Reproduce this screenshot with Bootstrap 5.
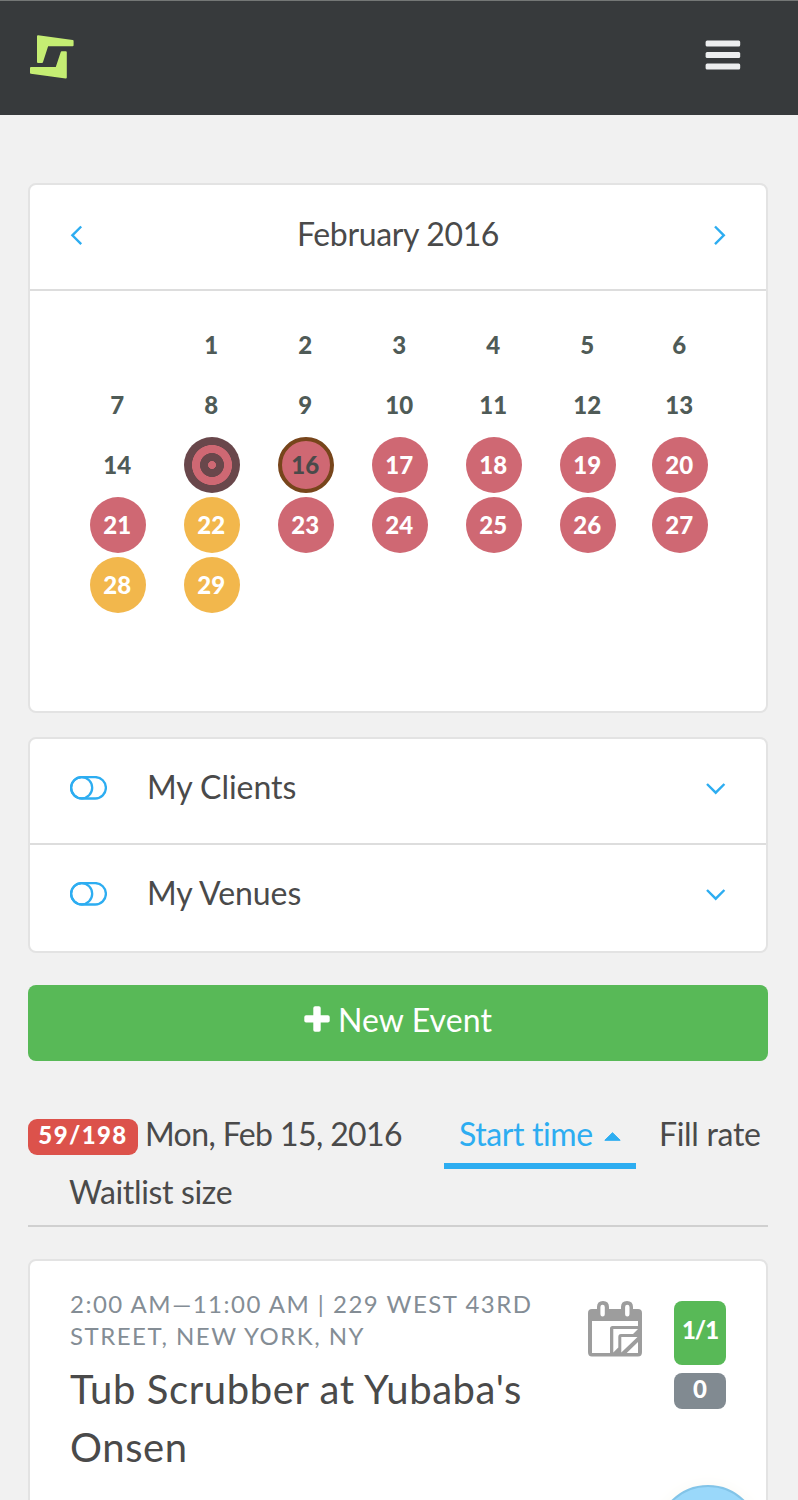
<!DOCTYPE html>
<html lang="en">
<head>
<meta charset="utf-8">
<meta name="viewport" content="width=device-width, initial-scale=1">
<title>Events</title>
<link rel="stylesheet" href="https://cdn.jsdelivr.net/npm/bootstrap@5.3.0/dist/css/bootstrap.min.css">
<style>
html,body{height:1500px;overflow:hidden}
body{background:#f1f1f1;color:#4a4a4a;font-family:Lato,"Open Sans",sans-serif;font-size:32px;line-height:40px;font-variant-ligatures:none}
svg{display:block;flex:none}
.topbar{height:115px;background:#373a3c;border-top:1px solid #747776;padding:0 57px 2px 30px}
.menu-btn{margin-top:-5px}
.page{height:1385px;overflow:hidden;padding:68px 30px 0 28px}
.panel{background:#fff;border:2px solid #e3e3e3;border-radius:8px}
.cal-panel{height:530px}
.cal-head{height:106px;border-bottom:2px solid #ddd;padding:0 40px 8px}
.cal-title{letter-spacing:-.35px;padding-top:1px}
.days{display:grid;grid-template-columns:repeat(6,94px) 90px;grid-auto-rows:60px;margin:24px 0 0 41px;place-items:center}
.day{width:56px;height:56px;border-radius:50%;display:flex;align-items:center;justify-content:center;font-size:24px;font-weight:900;line-height:52px;padding:0 1.5px 1px 0;color:#4f5b57}
.low{background:#cf6873;color:#fff}
.mid{background:#f2b74c;color:#fff}
.today{border:4px solid #77451b;color:#4a4a4a}
.picked{background:radial-gradient(circle,#cf6873 3.7px,#69474b 4.3px 11.7px,#cf6873 12.3px 19.7px,#69474b 20.3px)}
.filters{height:216px;margin-top:24px}
.filter-row{height:104px;padding:0 40px 9px}
.filter-row+.filter-row{height:108px;border-top:2px solid #ddd;padding-bottom:11px}
.filter-name{margin-left:40px;letter-spacing:-.05px}
.switch-ico{margin-top:2px}
.new-btn{height:76px;margin-top:32px;background:#58b957;color:#fff;border:0;border-radius:8px;font-size:32px;padding:0 0 8px}
.new-btn:hover{background:#58b957;color:#fff}
.new-text{padding-top:1px;letter-spacing:.1px}
.sorts{height:166px;padding-top:52px;border-bottom:2px solid #d0d0d0;line-height:42px}
.fill-count{flex:none;width:110px;height:36px;border-radius:9px;background:#dc524b;font-size:24px;font-weight:900;line-height:31px;letter-spacing:1.4px;padding:0;margin:6px 7px 0 0}
.date-text{flex:none;width:259px;letter-spacing:-.6px}
.sort-on{flex:none;width:192px;height:56px;margin-left:40px;border-bottom:6px solid #2dadf1;color:#2dadf1;padding-left:15px}
.start-text{width:137px;letter-spacing:-.4px}
.sort-up{margin:19px 0 0 8px}
.sort-next{margin-left:23px;letter-spacing:-.3px}
.wait{margin-left:41px;margin-top:2px;letter-spacing:-.35px}
.event-panel{height:300px;margin-top:32px;padding:27px 40px 0}
.meta-line{font-size:24px;line-height:32px;letter-spacing:1.5px;color:#848d95}
.event-name{font-size:40px;line-height:58px;font-weight:400;letter-spacing:.6px;margin:8px 0 0}
.cal-ico{margin:13px 32px 0 0}
.tag{width:52px;border-radius:8px;color:#fff;font-size:24px;font-weight:900;text-align:center}
.tag-full{height:64px;background:#58b957;line-height:58px;margin-top:13px;letter-spacing:-1px}
.tag-wait{height:36px;background:#818a91;line-height:31px;margin-top:8px}
.avatar{width:104px;height:104px;border-radius:50%;background:#9ad8fa;border:2px solid #82c4e8;box-shadow:0 0 16px #faf9f3;margin:76px -34px 0 -18px}
</style>
</head>
<body>
<nav class="topbar d-flex align-items-center justify-content-between">
  <svg width="44" height="44" viewBox="0 0 44 44" fill="#c5ed73" stroke="#c5ed73" stroke-width="2" stroke-linejoin="round"><path d="M8 1.3 42.6 6V10.2H17.4L12 27H8Z"/><path d="M1 33H26.5L31.7 17.2H35.8V42.5L1 37.8Z"/></svg>
  <svg class="menu-btn" width="36" height="30" viewBox="0 0 36 30" fill="#eceeef"><rect x=".6" y=".5" width="34.6" height="6" rx="1.5"/><rect x=".6" y="12" width="34.6" height="6" rx="1.5"/><rect x=".6" y="23.4" width="34.6" height="6" rx="1.5"/></svg>
</nav>
<main class="page">
  <section class="panel cal-panel">
    <div class="cal-head d-flex align-items-center justify-content-between">
      <svg class="mt-1" width="14" height="20" viewBox="0 0 14 20" fill="none" stroke="#2dadf1" stroke-width="2.4"><path d="M11.2 1.5 2.4 10.3 11.2 19.1"/></svg>
      <span class="cal-title">February 2016</span>
      <svg class="mt-1" width="14" height="20" viewBox="0 0 14 20" fill="none" stroke="#2dadf1" stroke-width="2.4"><path d="M3 1.5 11.8 10.3 3 19.1"/></svg>
    </div>
    <div class="days">
      <span></span><span class="day">1</span><span class="day">2</span><span class="day">3</span><span class="day">4</span><span class="day">5</span><span class="day">6</span>
      <span class="day">7</span><span class="day">8</span><span class="day">9</span><span class="day">10</span><span class="day">11</span><span class="day">12</span><span class="day">13</span>
      <span class="day">14</span><span class="day picked"></span><span class="day low today">16</span><span class="day low">17</span><span class="day low">18</span><span class="day low">19</span><span class="day low">20</span>
      <span class="day low">21</span><span class="day mid">22</span><span class="day low">23</span><span class="day low">24</span><span class="day low">25</span><span class="day low">26</span><span class="day low">27</span>
      <span class="day mid">28</span><span class="day mid">29</span>
    </div>
  </section>
  <section class="panel filters">
    <div class="filter-row d-flex align-items-center">
      <svg class="switch-ico" width="37" height="24" viewBox="0 0 37 24" fill="none" stroke="#2dadf1" stroke-width="2.3"><rect x="1.1" y="1.1" width="34.8" height="21.4" rx="10.7"/><circle cx="11.6" cy="11.8" r="10.6"/></svg>
      <span class="filter-name">My Clients</span>
      <svg class="ms-auto mt-1" width="20" height="14" viewBox="0 0 20 14" fill="none" stroke="#2dadf1" stroke-width="2.4"><path d="M1 2 9.7 10.7 18.4 2"/></svg>
    </div>
    <div class="filter-row d-flex align-items-center">
      <svg class="switch-ico" width="37" height="24" viewBox="0 0 37 24" fill="none" stroke="#2dadf1" stroke-width="2.3"><rect x="1.1" y="1.1" width="34.8" height="21.4" rx="10.7"/><circle cx="11.6" cy="11.8" r="10.6"/></svg>
      <span class="filter-name">My Venues</span>
      <svg class="ms-auto mt-1" width="20" height="14" viewBox="0 0 20 14" fill="none" stroke="#2dadf1" stroke-width="2.4"><path d="M1 2 9.7 10.7 18.4 2"/></svg>
    </div>
  </section>
  <button type="button" class="btn new-btn w-100 d-flex align-items-center justify-content-center gap-2">
    <svg width="26" height="26" viewBox="0 0 26 26" fill="#fff"><rect x=".3" y="9.2" width="25.4" height="7.4" rx="1.8"/><rect x="9.3" y=".3" width="7.4" height="25.4" rx="1.8"/></svg>
    <span class="new-text">New Event</span>
  </button>
  <div class="sorts">
    <div class="d-flex align-items-start text-nowrap">
      <span class="badge fill-count">59/198</span><span class="date-text">Mon, Feb 15, 2016</span>
      <span class="sort-on d-flex"><span class="start-text">Start time</span><svg class="sort-up" width="17" height="9" viewBox="0 0 17 9" fill="#2dadf1" stroke="#2dadf1" stroke-linejoin="round"><path d="M.8 8.3H16.2L8.5.7Z"/></svg></span>
      <span class="sort-next">Fill rate</span>
    </div>
    <div class="wait">Waitlist size</div>
  </div>
  <section class="panel event-panel d-flex align-items-start">
    <div class="flex-grow-1 text-nowrap">
      <div class="meta-line">2:00 AM—11:00 AM | 229 WEST 43RD<br>STREET, NEW YORK, NY</div>
      <h2 class="event-name">Tub Scrubber at Yubaba's<br>Onsen</h2>
    </div>
    <svg class="cal-ico" width="54" height="56" viewBox="0 0 54 56"><path fill="#9d9d9d" d="M4 8H9V6Q9 0 15 0Q21 0 21 6V8H33V6Q33 0 39 0Q45 0 45 6V8H50Q54 8 54 12V51Q54 55.5 50 55.5H4Q0 55.5 0 51V12Q0 8 4 8Z"/><path stroke="#fff" stroke-width="4.4" stroke-linecap="round" d="M14.6 6V13.3M39.3 6V13.3"/><path fill="#fff" d="M4 20H50V25H24.5Q22 25 22 27.5V52H4ZM25.3 28H50L45 33H33Q30.3 33 30.3 36V46.5L25.3 51.5ZM33.3 36H49.5L33.3 51.5ZM50 41V52H38.7Z"/></svg>
    <div>
      <div class="tag tag-full">1/1</div>
      <div class="tag tag-wait">0</div>
      <div class="avatar"></div>
    </div>
  </section>
</main>
<script src="https://cdn.jsdelivr.net/npm/bootstrap@5.3.0/dist/js/bootstrap.bundle.min.js"></script>
</body>
</html>
